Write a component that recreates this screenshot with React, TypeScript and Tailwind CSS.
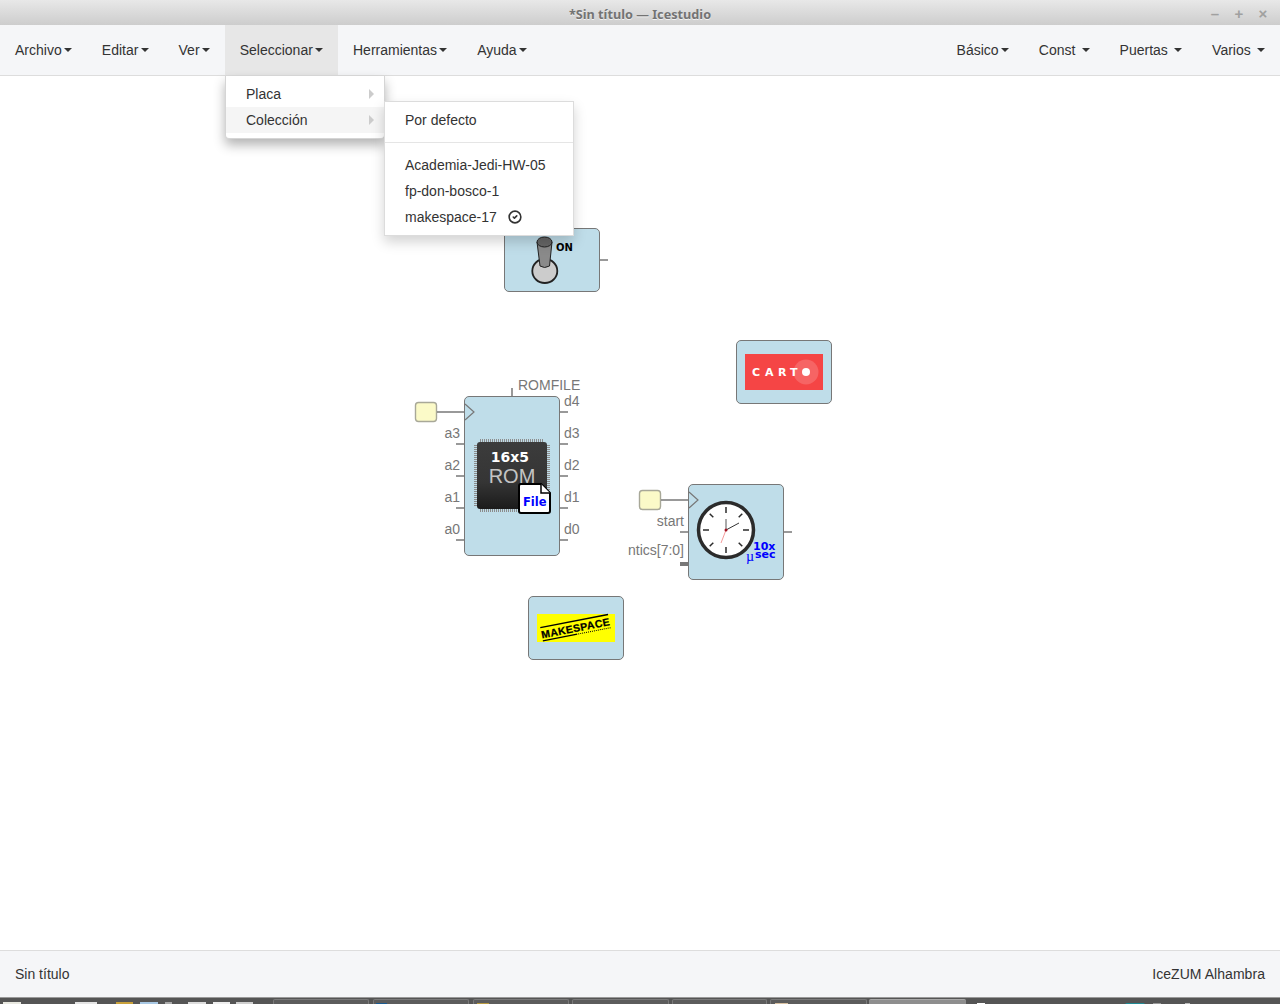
import React from 'react';
import { CircleCheck } from 'lucide-react';

const SANS = '"Liberation Sans", Arial, sans-serif';
const BOLD = '"DejaVu Sans", sans-serif';
const GREY = '#777777';

function Caret({ spaced }: { spaced?: boolean }) {
  return (
    <span
      className={`inline-block w-0 h-0 align-middle border-x-4 border-t-4 border-x-transparent border-t-[#333333] ${
        spaced ? 'ml-[6.25px]' : 'ml-[2.15px]'
      }`}
    />
  );
}

function NavItem({ label, active, spaced }: { label: string; active?: boolean; spaced?: boolean }) {
  return (
    <a className={`h-[50px] px-[15px] flex items-center whitespace-nowrap text-[#333333] ${active ? 'bg-[#e7e7e7]' : ''}`}>
      <span>{label}</span>
      <Caret spaced={spaced} />
    </a>
  );
}

function MenuRow({ children, active, arrow }: { children: React.ReactNode; active?: boolean; arrow?: boolean }) {
  return (
    <div className={`relative h-[26px] px-5 flex items-center text-[#333333] whitespace-nowrap ${active ? 'bg-[#f5f5f5]' : ''}`}>
      {children}
      {arrow && (
        <span className="absolute right-[10px] top-[8px] w-0 h-0 border-y-[5px] border-l-[5px] border-y-transparent border-l-[#cccccc]" />
      )}
    </div>
  );
}

// fondo común de los bloques del diagrama
function Block({ className, children }: { className: string; children: React.ReactNode }) {
  return (
    <div className={`absolute w-24 ${className}`}>
      <div className="absolute inset-0 bg-[#bfdde9] border border-[#777777] rounded-[5px]" />
      <svg className="absolute inset-0 w-full h-full overflow-visible">{children}</svg>
    </div>
  );
}

function Port({ x1, x2, y, w = 1.5 }: { x1: number; x2: number; y: number; w?: number }) {
  return <line x1={x1} x2={x2} y1={y} y2={y} stroke={GREY} strokeWidth={w} />;
}

function Label({ x, y, end, children }: { x: number; y: number; end?: boolean; children: string }) {
  return (
    <text x={x} y={y} fontSize={14} fontFamily={SANS} fill={GREY} textAnchor={end ? 'end' : 'start'}>
      {children}
    </text>
  );
}

// entrada de reloj: caja amarilla, cable y triángulo
function ClockPin({ y }: { y: number }) {
  return (
    <>
      <rect x={-48.5} y={y - 9.5} width={21} height={19} rx={3} fill="#fbfac8" stroke="#a8a898" strokeWidth={1.4} />
      <Port x1={-27} x2={1} y={y} />
      <path d={`M1 ${y - 8} L10 ${y} L1 ${y + 8}`} fill="#bfdde9" stroke={GREY} strokeWidth={1.2} />
    </>
  );
}

function SwitchBlock() {
  return (
    <Block className="left-[504px] top-[152px] h-16">
      <Port x1={96} x2={104} y={32} />
      <ellipse cx={40.8} cy={43} rx={12.5} ry={12} fill="#cccccc" stroke="#222222" strokeWidth={1.8} />
      <path d="M33 14 L36 38 Q40.5 41 45.5 38 L48 14 Z" fill="#8a8a8a" stroke="#222222" />
      <ellipse cx={40.5} cy={14} rx={7.5} ry={5} fill="#666666" stroke="#222222" />
      <text x={52} y={23} fontSize={10} fontWeight={700} fontFamily={BOLD} fill="#000000">
        ON
      </text>
    </Block>
  );
}

function CartoBlock() {
  return (
    <Block className="left-[736px] top-[264px] h-16">
      <rect x={9} y={14} width={78} height={36} fill="#f54545" />
      <circle cx={70} cy={32} r={12.5} fill="#ffffff" fillOpacity={0.17} />
      <circle cx={70} cy={32} r={4} fill="#ffffff" />
      <text x="16 29 42 54" y={36} fontSize={11} fontWeight={700} fontFamily={BOLD} fill="#ffffff">
        CART
      </text>
    </Block>
  );
}

function MakespaceBlock() {
  return (
    <Block className="left-[528px] top-[520px] h-16">
      <rect x={9} y={18} width={78} height={28} fill="#ffff00" />
      <g transform="rotate(-11 47 32)">
        <line x1={13} x2={82} y1={25} y2={25} stroke="#000000" strokeWidth={1.4} />
        <text x={47.5} y={36} textAnchor="middle" fontSize={10.5} fontWeight={700} fontFamily={SANS} fill="#000000" stroke="#000000" strokeWidth={0.25} letterSpacing={0.4}>
          MAKESPACE
        </text>
        <line x1={13} x2={48} y1={38.5} y2={38.5} stroke="#000000" strokeWidth={1.2} />
        <line x1={49} x2={82} y1={38.5} y2={38.5} stroke="#000000" strokeWidth={1} strokeDasharray="1 1" />
      </g>
    </Block>
  );
}

function RomBlock() {
  return (
    <Block className="left-[464px] top-[320px] h-40">
      <ClockPin y={16} />
      <line x1={48} x2={48} y1={-8} y2={0} stroke={GREY} strokeWidth={1.5} />
      <Label x={54} y={-6}>ROMFILE</Label>
      {[48, 80, 112, 144].map((y) => (
        <Port key={y} x1={-8} x2={0} y={y} />
      ))}
      {[16, 48, 80, 112, 144].map((y) => (
        <Port key={y} x1={96} x2={104} y={y} />
      ))}
      <Label x={-4} y={42} end>a3</Label>
      <Label x={-4} y={74} end>a2</Label>
      <Label x={-4} y={106} end>a1</Label>
      <Label x={-4} y={138} end>a0</Label>
      <Label x={100} y={10}>d4</Label>
      <Label x={100} y={42}>d3</Label>
      <Label x={100} y={74}>d2</Label>
      <Label x={100} y={106}>d1</Label>
      <Label x={100} y={138}>d0</Label>

      {/* chip */}
      <g stroke="#8c8c8c" strokeWidth={3} strokeDasharray="1 1">
        <line x1={16} x2={80} y1={44.5} y2={44.5} />
        <line x1={16} x2={80} y1={114.5} y2={114.5} />
        <line x1={11.5} x2={11.5} y1={49} y2={110} />
        <line x1={84.5} x2={84.5} y1={49} y2={110} />
      </g>
      <defs>
        <linearGradient id="chip" x1="0" y1="0" x2="0" y2="1">
          <stop offset="0" stopColor="#3c3c3c" />
          <stop offset="0.6" stopColor="#353535" />
          <stop offset="1" stopColor="#1b1b1b" />
        </linearGradient>
      </defs>
      <rect x={13} y={46} width={70} height={67} rx={3} fill="url(#chip)" />
      <text x={46} y={66} textAnchor="middle" fontSize={14} fontWeight={700} fontFamily={BOLD} fill="#ffffff">
        16x5
      </text>
      <text x={48} y={87} textAnchor="middle" fontSize={20} fontFamily={SANS} fill="#c4c4c4">
        ROM
      </text>
      {/* documento File */}
      <path
        d="M57 88 H77 L86 97 V115 Q86 117 84 117 H57 Q55 117 55 115 V90 Q55 88 57 88 Z"
        fill="#ffffff"
        stroke="#000000"
        strokeWidth={2}
      />
      <path d="M77 88 V97 H86" fill="#ffffff" stroke="#000000" strokeWidth={1.5} />
      <text x={59} y={110} fontSize={11.5} fontWeight={700} fontFamily={BOLD} fill="#0000ff">
        File
      </text>
    </Block>
  );
}

function TimerBlock() {
  const ticks = [0, 45, 90, 135, 180, 225, 270, 315];
  return (
    <Block className="left-[688px] top-[408px] h-24">
      <ClockPin y={16} />
      <Port x1={-8} x2={0} y={48} />
      <Port x1={-8} x2={0} y={80} w={4} />
      <Port x1={96} x2={104} y={48} />
      <Label x={-4} y={42} end>start</Label>
      <Label x={-4} y={71} end>ntics[7:0]</Label>

      <circle cx={38} cy={46} r={27.5} fill="#ffffff" stroke="#2b2b2b" strokeWidth={3.5} />
      {ticks.map((a) => (
        <line
          key={a}
          x1={38}
          x2={38}
          y1={23}
          y2={a % 90 === 0 ? 29 : 28}
          stroke="#2b2b2b"
          strokeWidth={1.5}
          transform={`rotate(${a} 38 46)`}
        />
      ))}
      <line x1={38} y1={46} x2={38} y2={35} stroke="#555555" strokeWidth={1} />
      <line x1={38} y1={46} x2={51} y2={39} stroke="#333333" strokeWidth={1} />
      <line x1={38} y1={46} x2={33} y2={59} stroke="#f08080" strokeWidth={0.8} />
      <circle cx={38} cy={46} r={1.5} fill="#a01020" />
      <text x={65} y={66} fontSize={11} fontWeight={700} fontFamily={BOLD} fill="#0000ff">
        10x
      </text>
      <text x={67} y={74} fontSize={11} fontWeight={700} fontFamily={BOLD} fill="#0000ff">
        sec
      </text>
      <text x={58} y={77} fontSize={14} fontFamily='"Liberation Serif", serif' fill="#0000ff">
        µ
      </text>
    </Block>
  );
}

function Tile({ className, children }: { className: string; children?: React.ReactNode }) {
  return (
    <div className={`h-[6px] mt-px bg-[#5c5c5c] border-t border-x border-[#7a7a7a] rounded-t-[2px] ${className}`}>
      {children}
    </div>
  );
}

function Taskbar() {
  return (
    <div className="h-[7px] bg-[#555555] border-t border-[#9a9a9a] flex overflow-hidden shrink-0">
      <div className="w-[273px] flex items-start pt-[4px]">
        <span className="ml-[3px] w-[18px] h-[2px] bg-[#e8e8e0]" />
        <span className="ml-[54px] w-[22px] h-[2px] bg-[#e4e4e4]" />
        <span className="ml-[19px] w-[17px] h-[2px] bg-[#c9a13a]" />
        <span className="ml-[7px] w-[18px] h-[2px] bg-[#a8c8e4]" />
        <span className="ml-[7px] w-[7px] h-[2px] bg-[#aaaaaa]" />
        <span className="ml-[16px] w-[18px] h-[2px] bg-[#dddddd]" />
        <span className="ml-[7px] w-[17px] h-[2px] bg-[#eeeeee]" />
        <span className="ml-[6px] w-[17px] h-[2px] bg-[#cfcfcf]" />
      </div>
      <Tile className="w-[96px] mr-[4px]" />
      <Tile className="w-[96px] mr-[4px] pl-[2px] pt-[3px]">
        <div className="w-[11px] h-[2px] bg-[#1a5a90]" />
      </Tile>
      <Tile className="w-[96px] mr-[3px] pl-[3px] pt-[3px]">
        <div className="w-[12px] h-[2px] bg-[#b89a40]" />
      </Tile>
      <Tile className="w-[97px] mr-[3px]" />
      <Tile className="w-[95px] mr-[3px]" />
      <Tile className="w-[97px] mr-[2px] pl-[4px] pt-[3px]">
        <div className="w-[13px] h-[2px] bg-[#d8c0a0]" />
      </Tile>
      <div className="w-[97px] h-[6px] mt-px bg-[#8e8e8e] border-t border-[#a8a8a8] rounded-t-[2px]" />
      <div className="flex-1 relative">
        <span className="absolute left-[11px] top-[5px] w-[8px] h-[2px] bg-white" />
        <span className="absolute left-[159px] top-[5px] w-[20px] h-[2px] rounded-t-full bg-[#1f8a94]" />
        <span className="absolute left-[187px] top-[5px] w-[8px] h-[2px] bg-[#999999]" />
        <span className="absolute left-[219px] top-[5px] w-[5px] h-[2px] bg-[#bbbbbb]" />
      </div>
    </div>
  );
}

export default function App() {
  return (
    <div className="w-[1280px] h-[1004px] flex flex-col bg-white text-[14px] overflow-hidden" style={{ fontFamily: SANS }}>
      {/* barra de título */}
      <div className="relative h-[25px] shrink-0 flex items-center justify-center pt-[4px] bg-gradient-to-b from-[#e8e8e8] to-[#cdcdcd]">
        <span className="text-[12.7px] font-bold text-[#737373] [text-shadow:0_1px_0_#f0f0f0]" style={{ fontFamily: '"Noto Sans", sans-serif' }}>
          *Sin título — Icestudio
        </span>
        <div className="absolute right-[12px] top-[6px] flex gap-[14px] text-[#a0a0a0] text-[15px] leading-[15px] font-bold">
          <span className="w-[10px] text-center">–</span>
          <span className="w-[10px] text-center">+</span>
          <span className="w-[10px] text-center">×</span>
        </div>
      </div>

      {/* navbar */}
      <nav className="h-[51px] shrink-0 flex justify-between bg-[#f5f6f8] border-b border-[#dddddd]">
        <div className="flex">
          <NavItem label="Archivo" />
          <NavItem label="Editar" />
          <NavItem label="Ver" />
          <NavItem label="Seleccionar" active />
          <NavItem label="Herramientas" />
          <NavItem label="Ayuda" />
        </div>
        <div className="flex">
          <NavItem label="Básico" />
          <NavItem label="Const" spaced />
          <NavItem label="Puertas" spaced />
          <NavItem label="Varios" spaced />
        </div>
      </nav>

      {/* lienzo */}
      <main className="relative flex-1 min-h-0">
        <SwitchBlock />
        <CartoBlock />
        <RomBlock />
        <TimerBlock />
        <MakespaceBlock />

        <div className="absolute left-[225px] top-0 w-[160px] py-[5px] bg-white border-x border-b border-[#d5d5d5] rounded-b-[4px] shadow-[0_6px_12px_rgba(0,0,0,0.3)]">
          <MenuRow arrow>Placa</MenuRow>
          <MenuRow arrow active>Colección</MenuRow>
        </div>
        <div className="absolute left-[384px] top-[25px] w-[190px] py-[5px] bg-white border border-[#dcdcdc] shadow-[0_6px_12px_rgba(0,0,0,0.175)]">
          <MenuRow>Por defecto</MenuRow>
          <div className="h-px my-[9px] bg-[#e5e5e5]" />
          <MenuRow>Academia-Jedi-HW-05</MenuRow>
          <MenuRow>fp-don-bosco-1</MenuRow>
          <MenuRow>
            makespace-17
            <CircleCheck className="ml-[11px] w-[14px] h-[14px] -mt-[1px]" strokeWidth={2.8} />
          </MenuRow>
        </div>
      </main>

      {/* pie */}
      <footer className="h-[47px] shrink-0 px-[15px] flex items-center justify-between bg-[#f5f6f8] border-t border-[#dddddd] text-[#333333]">
        <span>Sin título</span>
        <span className="tracking-[0.05px]">IceZUM Alhambra</span>
      </footer>
      <Taskbar />
    </div>
  );
}
